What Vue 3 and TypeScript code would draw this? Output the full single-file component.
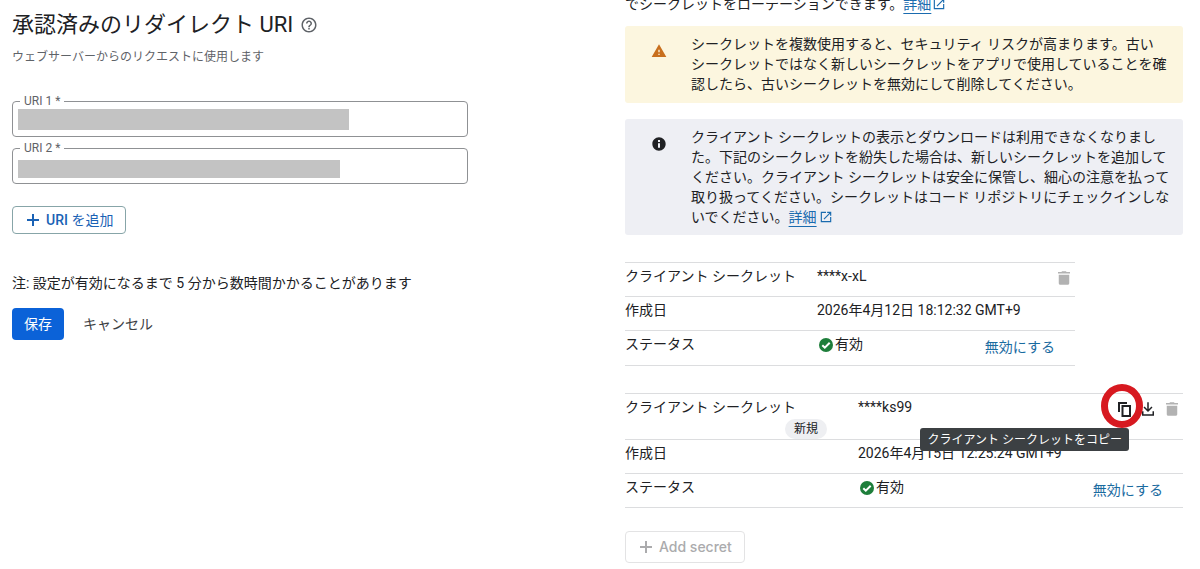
<script setup lang="ts">
interface UriField {
  id: string
  label: string
  mask: string
}

interface Secret {
  id: string
  value: string
  created: string
  isNew: boolean
}

const uris: UriField[] = [
  { id: 'uri-1', label: 'URI 1 *', mask: 'mask-tall' },
  { id: 'uri-2', label: 'URI 2 *', mask: 'mask-short' },
]

const secrets: Secret[] = [
  { id: 'old', value: '****x-xL', created: '2026年4月12日 18:12:32 GMT+9', isNew: false },
  { id: 'new', value: '****ks99', created: '2026年4月15日 12:25:24 GMT+9', isNew: true },
]
</script>

<template>
  <main class="page" lang="ja">
    <form class="redirects" @submit.prevent>
      <h2 class="title">
        承認済みのリダイレクト URI
        <button type="button" class="icon-button help" aria-label="ヘルプ">
          <svg viewBox="0 0 24 24" width="18" height="18">
            <path d="M11 18h2v-2h-2v2zm1-16C6.48 2 2 6.48 2 12s4.48 10 10 10 10-4.48 10-10S17.52 2 12 2zm0 18c-4.41 0-8-3.59-8-8s3.59-8 8-8 8 3.59 8 8-3.59 8-8 8zm0-14c-2.21 0-4 1.79-4 4h2c0-1.1.9-2 2-2s2 .9 2 2c0 2-3 1.75-3 5h2c0-2.25 3-2.5 3-5 0-2.21-1.79-4-4-4z" />
          </svg>
        </button>
      </h2>
      <p class="subtitle">ウェブサーバーからのリクエストに使用します</p>

      <div class="fields">
        <div v-for="uri in uris" :key="uri.id" class="field">
          <input :id="uri.id" type="text" />
          <label :for="uri.id">{{ uri.label }}</label>
          <span class="mask" :class="uri.mask"></span>
        </div>
      </div>

      <button type="button" class="outlined add-uri">
        <svg viewBox="0 0 14 14" width="14" height="14"><path d="M6 1h2v5h5v2H8v5H6V8H1V6h5z" /></svg>
        <span>URI <span class="regular">を追加</span></span>
      </button>

      <p class="note">注: 設定が有効になるまで 5 分から数時間かかることがあります</p>

      <div class="actions">
        <button type="submit" class="save">保存</button>
        <button type="button" class="cancel">キャンセル</button>
      </div>
    </form>

    <section class="secrets">
      <p class="intro">
        でシークレットをローテーションできます。<a href="#rotate">詳細</a><svg class="external" viewBox="0 0 24 24" width="14" height="14"><path d="M19 19H5V5h7V3H3v18h18v-9h-2v7zM14 3v2h3.600l-9.800 9.800 1.400 1.400L19 6.400V10h2V3h-7z" /></svg>
      </p>

      <div class="notice warning">
        <svg class="notice-icon" viewBox="0 0 24 24" width="16" height="16">
          <path d="M1 21h22L12 2 1 21zm12-3h-2v-2h2v2zm0-4h-2v-4h2v4z" />
        </svg>
        <p>シークレットを複数使用すると、セキュリティ リスクが高まります。古い<span class="word">シークレット</span>ではなく新しいシークレットをアプリで使用していることを確認したら、古いシークレットを無効にして削除してください。</p>
      </div>

      <div class="notice info">
        <svg class="notice-icon" viewBox="0 0 24 24" width="16" height="16">
          <path d="M12 2C6.480 2 2 6.480 2 12s4.480 10 10 10 10-4.480 10-10S17.520 2 12 2zm1.500 15.500h-3V11h3v6.500zm0-8.500h-3V6h3v3z" />
        </svg>
        <p>クライアント シークレットの表示とダウンロードは利用できなくなりました。下記のシークレットを紛失した場合は、新しいシークレットを追加してください。クライアント シークレットは安全に保管し、細心の注意を払って取り扱ってください。シークレットはコード リポジトリにチェックインしないでください。<a href="#secret-help">詳細</a><svg class="external" viewBox="0 0 24 24" width="14" height="14"><path d="M19 19H5V5h7V3H3v18h18v-9h-2v7zM14 3v2h3.600l-9.800 9.800 1.400 1.400L19 6.400V10h2V3h-7z" /></svg></p>
      </div>

      <table v-for="secret in secrets" :key="secret.id" :class="{ recent: secret.isNew }">
        <tbody>
          <tr>
            <th scope="row">
              クライアント シークレット
              <span v-if="secret.isNew" class="badge">新規</span>
            </th>
            <td>{{ secret.value }}</td>
            <td class="tools">
              <div class="tool-row">
                <template v-if="secret.isNew">
                  <button type="button" class="icon-button copy" aria-describedby="copy-tip" aria-label="コピー">
                    <svg viewBox="0 0 18 18" width="18" height="18">
                      <path d="M3 2h9v2H5v8H3zM6.500 5H16v12H6.500zM8.500 7v8H14V7z" fill-rule="evenodd" />
                    </svg>
                    <svg class="ring" viewBox="0 0 42 44" width="42" height="44">
                      <ellipse cx="21" cy="22" rx="17.500" ry="18.500" />
                    </svg>
                    <span id="copy-tip" class="tooltip" role="tooltip">クライアント シークレットをコピー</span>
                  </button>
                  <button type="button" class="icon-button" aria-label="ダウンロード">
                    <svg viewBox="0 0 24 24" width="18" height="18">
                      <path d="M11 3h2v9.200l3.600-3.600L18 10l-6 6-6-6 1.400-1.400 3.600 3.600V3zM4 15h2v4h12v-4h2v6H4v-6z" />
                    </svg>
                  </button>
                </template>
                <button type="button" class="icon-button" aria-label="削除" disabled>
                  <svg viewBox="0 0 24 24" width="18" height="18">
                    <path d="M5 7.500h14V19c0 1.100-.9 2-2 2H7c-1.100 0-2-.9-2-2V7.500zM20 4h-4.500l-1-1h-5l-1 1H4v2h16V4z" />
                  </svg>
                </button>
              </div>
            </td>
          </tr>
          <tr>
            <th scope="row">作成日</th>
            <td colspan="2">{{ secret.created }}</td>
          </tr>
          <tr>
            <th scope="row">ステータス</th>
            <td>
              <span class="status">
                <svg viewBox="0 0 18 18" width="18" height="18">
                  <circle cx="9" cy="9" r="7" />
                  <path d="M5.300 9.200l2.500 2.500 4.900-5" />
                </svg>有効
              </span>
            </td>
            <td class="tools"><button type="button" class="disable">無効にする</button></td>
          </tr>
        </tbody>
      </table>

      <button type="button" class="outlined add-secret" disabled>
        <svg viewBox="0 0 14 14" width="14" height="14"><path d="M6 1h2v5h5v2H8v5H6V8H1V6h5z" /></svg>
        Add secret
      </button>
    </section>
  </main>
</template>

<style>
body {
  margin: 0;
  background: #fff;
}
</style>

<style scoped>
.page {
  display: grid;
  grid-template-columns: 613fr 558fr;
  padding: 0 17px 0 12px;
  font: 14px/20px Roboto, "Noto Sans CJK JP", sans-serif;
  color: #202124;
}

h2,
p {
  margin: 0;
  font-weight: 400;
}

button {
  font: inherit;
  color: inherit;
  margin: 0;
  padding: 0;
  border: 0;
  background: none;
  cursor: pointer;
}

svg {
  fill: currentColor;
  flex: none;
}

a {
  color: #1a6baf;
  text-decoration: underline;
  text-underline-offset: 4px;
}

.title {
  display: flex;
  align-items: center;
  gap: 7px;
  padding-top: 11px;
  font-size: 22px;
  line-height: 28px;
}

.icon-button {
  display: block;
  width: 18px;
  height: 18px;
}

.icon-button svg {
  display: block;
}

.help {
  color: #5f6368;
}

.subtitle {
  margin-top: 8px;
  font-size: 12px;
  color: #5f6368;
}

.fields {
  display: grid;
  gap: 11px;
  max-width: 456px;
  margin-top: 34px;
}

.field {
  position: relative;
}

.field input {
  display: block;
  box-sizing: border-box;
  width: 100%;
  height: 36px;
  padding: 0 12px;
  border: 1px solid #8f9194;
  border-radius: 4px;
  font: inherit;
  background: #fff;
}

.field label {
  position: absolute;
  top: -8px;
  left: 8px;
  padding: 0 4px;
  background: #fff;
  font-size: 12px;
  line-height: 16px;
  color: #5f6368;
}

.mask {
  position: absolute;
  left: 6px;
  background: #c3c3c3;
}

.mask-tall {
  top: 8px;
  width: 331px;
  height: 21px;
}

.mask-short {
  top: 12px;
  width: 322px;
  height: 18px;
}

.outlined {
  display: flex;
  align-items: center;
  gap: 6px;
  padding: 0 12px 0 13px;
  border: 1px solid #87a5a8;
  border-radius: 4px;
  font-weight: 500;
}

.regular {
  font-weight: 400;
}

.add-uri {
  height: 28px;
  margin-top: 22px;
  color: #1a62b5;
}

.note {
  margin-top: 39px;
}

.actions {
  display: flex;
  gap: 19px;
  margin-top: 15px;
}

.actions button {
  height: 32px;
}

.save {
  padding: 0 12px;
  border-radius: 4px;
  background: #0b62d8;
  color: #fff;
}

.cancel {
  color: #3c4043;
}

.intro {
  margin-top: -6px;
}

.external {
  margin-left: 1px;
  vertical-align: -2px;
  color: #1a6baf;
}

.notice {
  display: flex;
  gap: 24px;
  margin-top: 16px;
  padding: 8px 8px 8px 26px;
  border-radius: 3px;
}

.word {
  white-space: nowrap;
}

.intro + .notice {
  margin-top: 12px;
}

.notice-icon {
  margin-top: 9px;
}

.notice .external {
  margin-left: 2px;
}

.warning {
  padding-bottom: 9px;
  background: #fcf6df;
}

.warning .notice-icon {
  color: #c86f1d;
}

.info {
  background: #eeeff4;
}

table {
  width: 100%;
  max-width: 450px;
  margin-top: 27px;
  border-collapse: collapse;
  table-layout: fixed;
}

table.recent {
  max-width: none;
}

tr {
  height: 34px;
  border-top: 1px solid #dcdddf;
}

tr:last-child {
  height: 35px;
  border-bottom: 1px solid #dcdddf;
}

.recent tr:last-child {
  height: 34px;
}

th,
td {
  padding: 3px 0 0;
  text-align: left;
  vertical-align: top;
  font-weight: 400;
}

th {
  width: 192px;
}

.recent th {
  width: 233px;
}

.recent tr:first-child {
  height: 46px;
}

.badge {
  display: block;
  width: fit-content;
  margin: 2px 31px 0 auto;
  padding: 0 9px;
  border-radius: 10px;
  background: #eeeff2;
  font-size: 12px;
}

.tools {
  width: 110px;
}

.tool-row {
  display: flex;
  justify-content: flex-end;
  gap: 6px;
  padding: 3px 2px 0 0;
}

.icon-button:disabled {
  color: #b2b2b2;
  cursor: default;
}

.copy {
  position: relative;
}

.ring {
  position: absolute;
  top: -16px;
  left: -14px;
  fill: none;
  stroke: #d71920;
  stroke-width: 7;
}

.tooltip {
  position: absolute;
  top: 28px;
  right: 4px;
  padding: 2px 7px 1px 8px;
  border-radius: 3px;
  background: #3c4043;
  color: #fff;
  font-size: 12px;
  white-space: nowrap;
}

.status {
  display: flex;
}

.status svg {
  margin-top: 2px;
}

.status circle {
  fill: #1e7e3b;
}

.status path {
  fill: none;
  stroke: #fff;
  stroke-width: 2;
}

.disable {
  display: block;
  margin: 3px 20px 0 auto;
  color: #1a6b9f;
}

.add-secret {
  height: 32px;
  margin-top: 23px;
  border-color: #e3e3e4;
  color: #ababad;
  font-family: Inter, Roboto, sans-serif;
  cursor: default;
}
</style>
